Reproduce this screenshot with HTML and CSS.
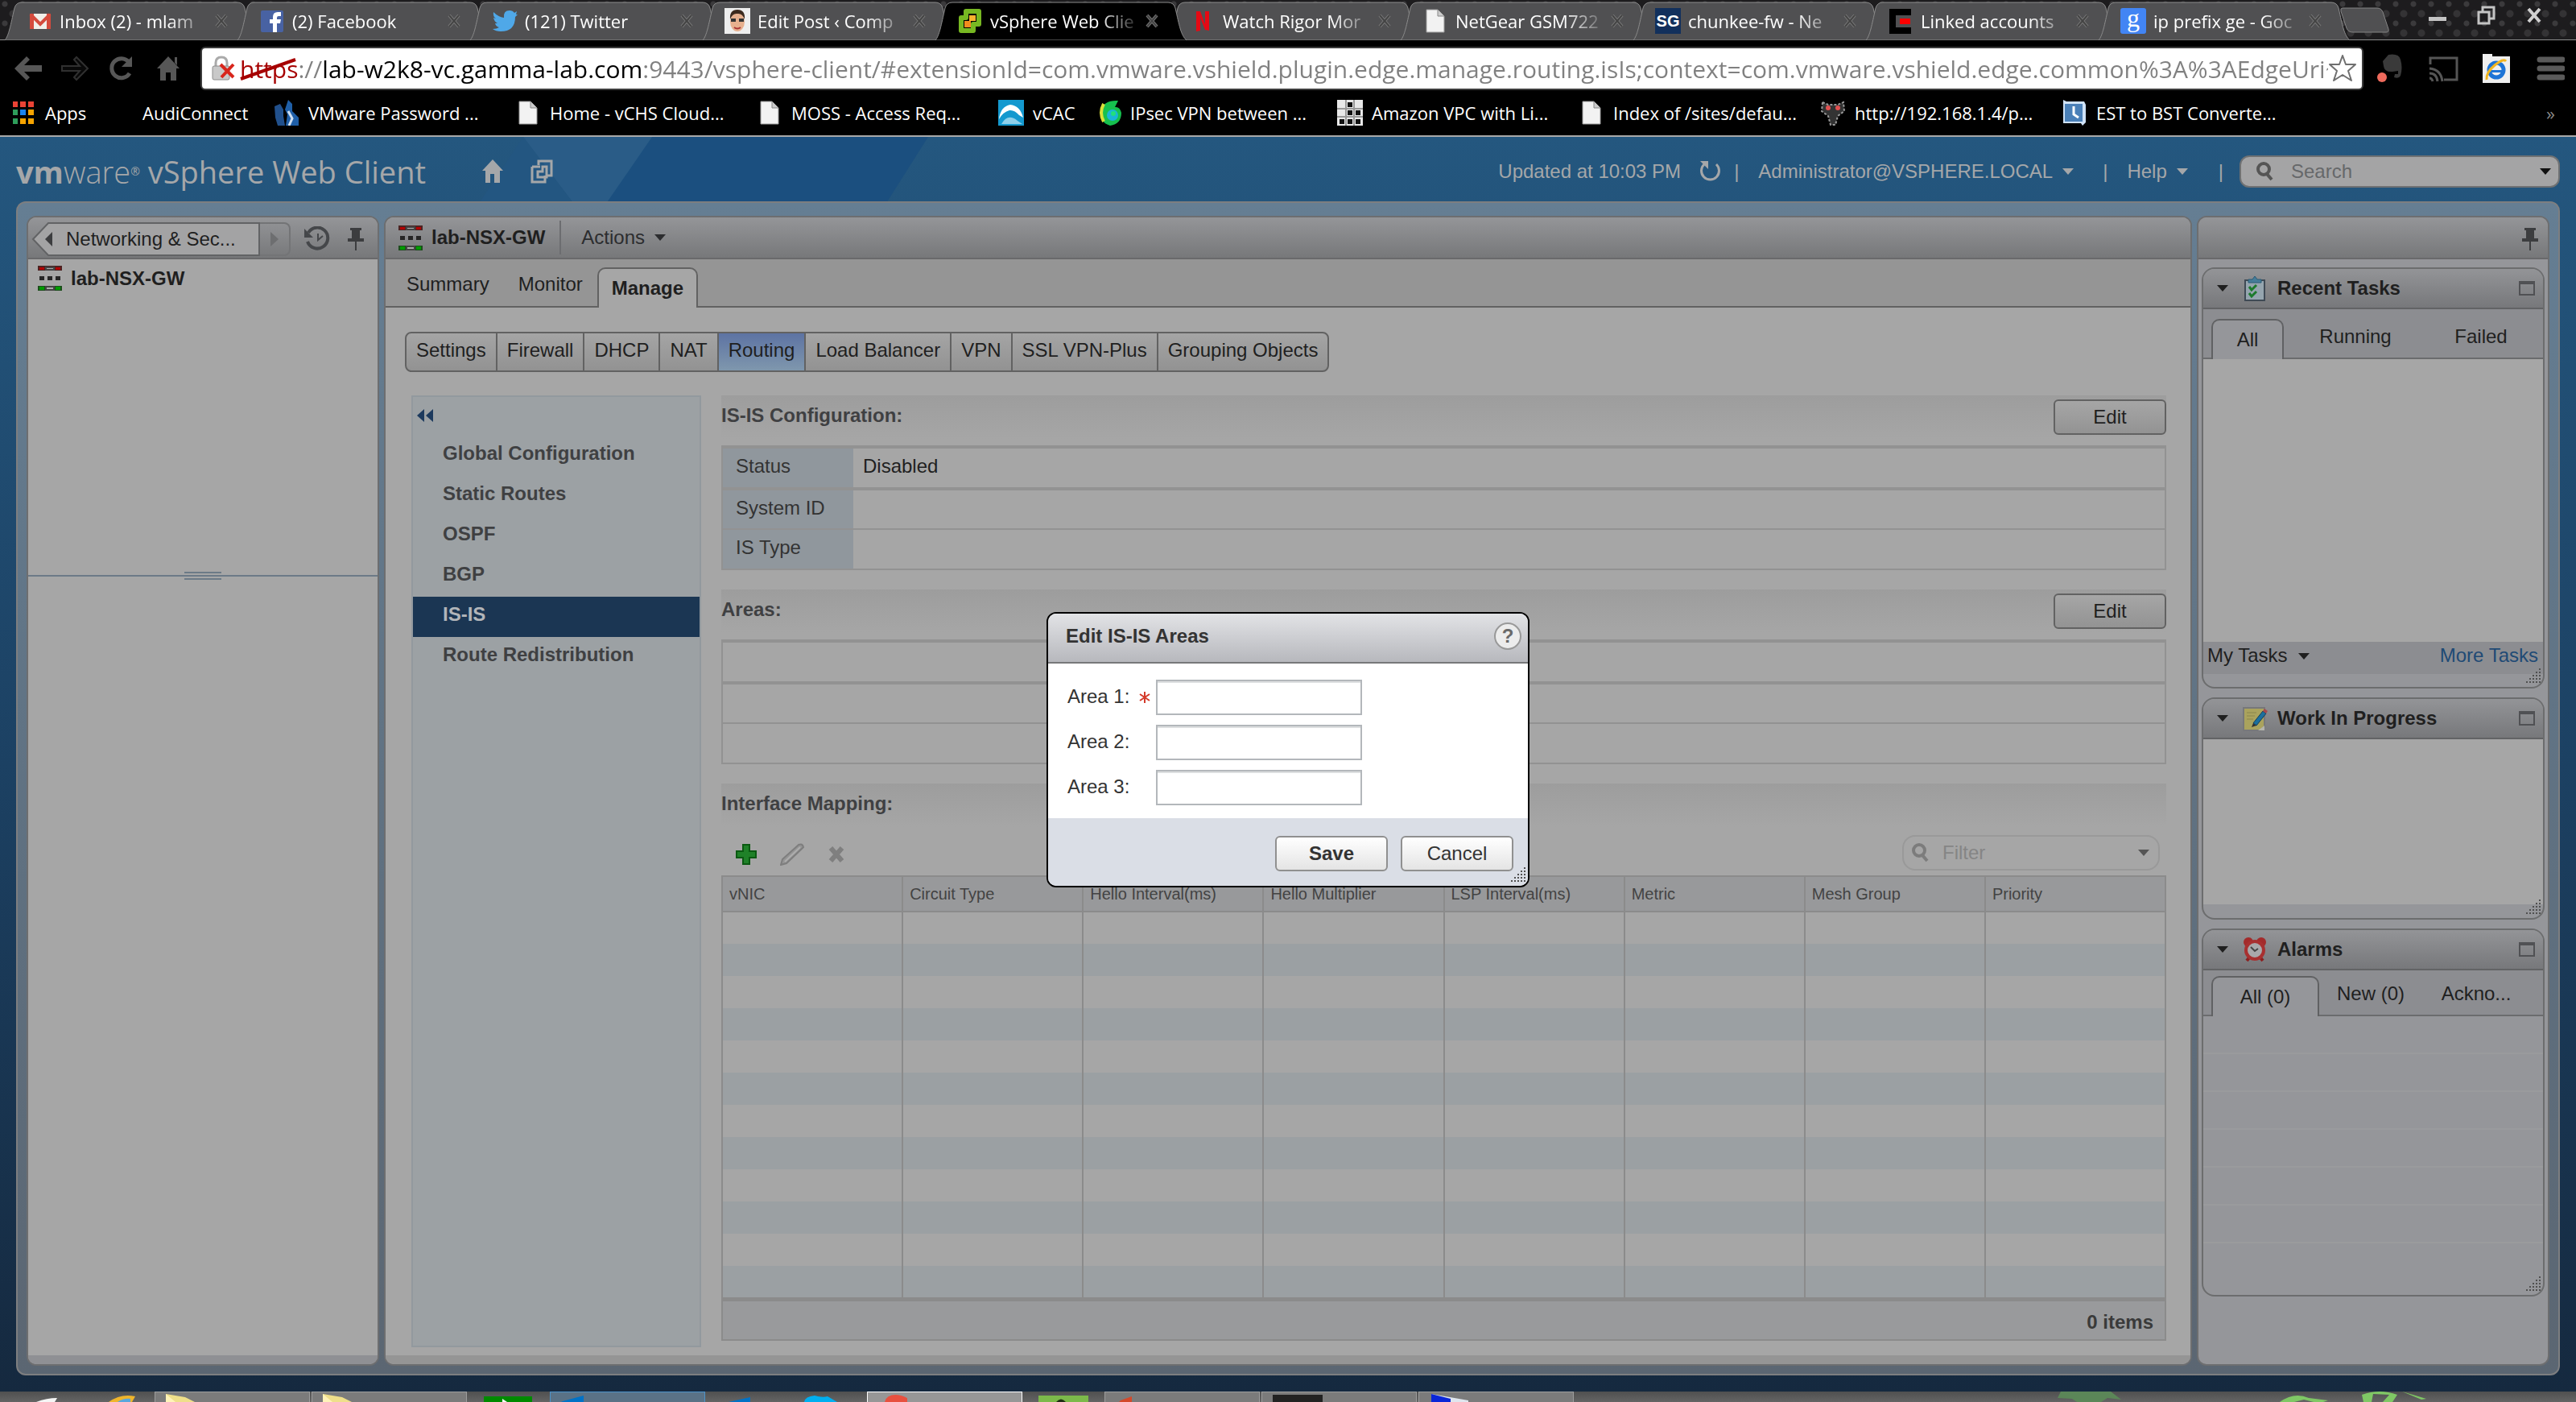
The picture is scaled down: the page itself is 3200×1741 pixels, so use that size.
FILE: index.html
```html
<!DOCTYPE html>
<html lang="en">
<head>
    <meta charset="UTF-8">
    <meta name="viewport" content="width=device-width, initial-scale=1.0">
    <title>vSphere Web Client</title>
    <link rel="stylesheet" href="styles.css">
</head>
<body>

    <!-- Shared icons -->
    <svg class="defs" aria-hidden="true">
        <symbol id="tab" viewBox="0 0 314 48">
            <path d="M1 48 C6 42 8 30 13 8 Q15 1 22 1 H290 Q297 1 299 8 C304 30 306 42 313 48 Z"/>
        </symbol>
        <symbol id="close" viewBox="0 0 18 18"><path d="M3 2 L15 16 M15 2 L3 16" stroke="#7a7a7a" stroke-width="4"/><path d="M3 2 L15 16 M15 2 L3 16" stroke="#444" stroke-width="2"/></symbol>
        <symbol id="page" viewBox="0 0 32 32"><path d="M5 2 H19 L27 10 V30 H5 Z" fill="#f2f2f2" stroke="#999" stroke-width="1"/><path d="M19 2 V10 H27" fill="#ccc" stroke="#888"/></symbol>
        <symbol id="caret" viewBox="0 0 14 8"><path d="M0 0 H14 L7 8 Z"/></symbol>
        <symbol id="pin" viewBox="0 0 20 28"><path d="M3 0 H17 V3 H15 V13 H20 V17 H11 V28 H9 V17 H0 V13 H5 V3 H3 Z"/></symbol>
        <symbol id="edge" viewBox="0 0 30 31">
            <path d="M0 0 H30 V6 H0 Z" fill="#4c2322"/><path d="M2 2 H8 V5 H2 Z M22 2 H28 V5 H22 Z" fill="#b30000"/><path d="M9 1 H21 V6 H9 Z" fill="#444"/><path d="M11 3 H19 V4 H11 Z" fill="#aaa"/>
            <path d="M2 13 H8 V18 H2 Z M12 13 H18 V18 H12 Z M22 13 H28 V18 H22 Z" fill="#262626"/>
            <path d="M0 25 H30 V31 H0 Z" fill="#1d4d1d"/><path d="M2 26 H8 V30 H2 Z M22 26 H28 V30 H22 Z" fill="#009a00"/><path d="M9 25 H21 V31 H9 Z" fill="#444"/><path d="M11 27 H19 V29 H11 Z" fill="#aaa"/>
        </symbol>
        <symbol id="search" viewBox="0 0 22 24"><circle cx="10" cy="9" r="7" fill="none" stroke="currentColor" stroke-width="4"/><path d="M14 15 L20 22" stroke="currentColor" stroke-width="4"/></symbol>
        <symbol id="window" viewBox="0 0 20 18"><path d="M1 2 H19 V17 H1 Z" fill="none" stroke="#505154" stroke-width="2"/><path d="M0 0 H20 V4 H0 Z" fill="#505154"/></symbol>
        <symbol id="grip" viewBox="0 0 20 22">
            <path d="M18 1 V21 M14 5 V21 M10 9 V21 M6 13 V21 M2 17 V21" stroke="currentColor" stroke-width="2" stroke-dasharray="2 2"/>
        </symbol>
        <symbol id="folder" viewBox="0 0 36 10"><path d="M0 0 L24 4 L36 10 H0 Z" fill="#efdf8a"/><path d="M0 0 L12 10 H0 Z" fill="#fff3b8"/></symbol>
    </svg>

    <!-- Browser tabs -->
    <div class="tabstrip">
        <div class="tab"><svg class="tab-shape"><use href="#tab"/></svg><svg class="fav" viewBox="0 0 32 32"><path d="M4 7 H30 V26 H4 Z" fill="#f1efe9"/><path d="M4 7 H9 V26 H4 Z M25 7 H30 V26 H25 Z" fill="#d54b3d"/><path d="M5 8 L17 20 L29 8" fill="none" stroke="#d54b3d" stroke-width="4"/></svg><span class="tab-title">Inbox (2) - mlam</span><button class="tab-close" aria-label="Close tab"><svg><use href="#close"/></svg></button></div>
        <div class="tab"><svg class="tab-shape"><use href="#tab"/></svg><svg class="fav" viewBox="0 0 32 32"><rect x="2" y="3" width="28" height="27" rx="2" fill="#4862a3"/><path d="M17 30 V19 H13 V14 H17 V11 Q17 5 23 5 H27 V10 H24 Q22 10 22 12 V14 H27 L26 19 H22 V30 Z" fill="#fff"/></svg><span class="tab-title">(2) Facebook</span><button class="tab-close" aria-label="Close tab"><svg><use href="#close"/></svg></button></div>
        <div class="tab"><svg class="tab-shape"><use href="#tab"/></svg><svg class="fav" viewBox="0 0 32 32"><path d="M2 5 Q8 11 15 12 Q14 3 22 3 Q26 3 28 6 L31 4 L30 8 L32 8 L29 11 Q29 29 11 29 Q5 29 1 26 Q6 26 9 24 Q5 23 4 19 H7 Q3 17 2 12 L5 13 Q1 10 2 5 Z" fill="#4fa8e8"/></svg><span class="tab-title">(121) Twitter</span><button class="tab-close" aria-label="Close tab"><svg><use href="#close"/></svg></button></div>
        <div class="tab"><svg class="tab-shape"><use href="#tab"/></svg><svg class="fav" viewBox="0 0 32 32"><path d="M0 0 H32 V32 H0 Z" fill="#eee"/><ellipse cx="16" cy="17" rx="9" ry="12" fill="#e7b08e"/><path d="M7 14 Q6 2 16 2 Q26 2 25 14 Q22 6 16 7 Q10 6 7 14 Z" fill="#3c2a1e"/><path d="M8 13 H14 V17 H8 Z M18 13 H24 V17 H18 Z" fill="#333"/><path d="M12 24 Q16 27 20 24" stroke="#a33" stroke-width="2" fill="none"/></svg><span class="tab-title">Edit Post ‹ Comp</span><button class="tab-close" aria-label="Close tab"><svg><use href="#close"/></svg></button></div>
        <div class="tab tab-active"><svg class="tab-shape"><use href="#tab"/></svg><svg class="fav" viewBox="0 0 32 32"><path d="M11 4 H27 V20 H20 V28 H5 V12 H11 Z" fill="none" stroke="#77b822" stroke-width="6" stroke-linejoin="round"/><path d="M15 9 H23 V16 H15 Z" fill="#f9b32f"/><path d="M9 16 H17 V24 H9 Z" fill="#f28c1e"/></svg><span class="tab-title">vSphere Web Clie</span><button class="tab-close" aria-label="Close tab"><svg><use href="#close"/></svg></button></div>
        <div class="tab"><svg class="tab-shape"><use href="#tab"/></svg><svg class="fav" viewBox="0 0 32 32"><path d="M8 4 H13 L19 20 V4 H24 V28 L19 27 L13 12 V28 L8 29 Z" fill="#e50914"/></svg><span class="tab-title">Watch Rigor Mor</span><button class="tab-close" aria-label="Close tab"><svg><use href="#close"/></svg></button></div>
        <div class="tab"><svg class="tab-shape"><use href="#tab"/></svg><svg class="fav"><use href="#page"/></svg><span class="tab-title">NetGear GSM722</span><button class="tab-close" aria-label="Close tab"><svg><use href="#close"/></svg></button></div>
        <div class="tab"><svg class="tab-shape"><use href="#tab"/></svg><span class="fav fav-sg">SG</span><span class="tab-title">chunkee-fw - Ne</span><button class="tab-close" aria-label="Close tab"><svg><use href="#close"/></svg></button></div>
        <div class="tab"><svg class="tab-shape"><use href="#tab"/></svg><svg class="fav" viewBox="0 0 32 32"><path d="M2 1 H29 V9 H10 V24 H29 V32 H2 Z" fill="#000"/><path d="M15 13 H28 V20 H15 Z" fill="#f00"/></svg><span class="tab-title">Linked accounts</span><button class="tab-close" aria-label="Close tab"><svg><use href="#close"/></svg></button></div>
        <div class="tab"><svg class="tab-shape"><use href="#tab"/></svg><span class="fav fav-google">g</span><span class="tab-title">ip prefix ge - Goc</span><button class="tab-close" aria-label="Close tab"><svg><use href="#close"/></svg></button></div>
        <button class="new-tab" aria-label="New tab"><svg viewBox="0 0 62 32"><path d="M3 1 H46 Q51 1 53 6 L60 27 Q61 31 57 31 H16 Q10 31 8 26 L1 5 Q0 1 3 1 Z" fill="#505052" stroke="#858585" stroke-width="1"/></svg></button>
        <div class="window-buttons">
            <button aria-label="Minimize"><svg viewBox="0 0 24 24"><path d="M1 14 H23 V19 H1 Z" fill="#c4c4c4"/></svg></button>
            <button aria-label="Restore"><svg viewBox="0 0 24 24"><path d="M8 8 V2 H22 V16 H17 M3 8 H16 V22 H3 Z" fill="none" stroke="#c4c4c4" stroke-width="3"/></svg></button>
            <button aria-label="Close window"><svg viewBox="0 0 24 24"><path d="M5 4 L19 20 M19 4 L5 20" stroke="#d0d0d0" stroke-width="4"/></svg></button>
        </div>
    </div>

    <!-- Address bar -->
    <div class="toolbar">
        <button class="nav-button" aria-label="Back"><svg viewBox="0 0 36 32"><path d="M1 16 L16 1 L20 5 L13 12 H35 V20 H13 L20 27 L16 31 Z" fill="#575757"/></svg></button>
        <button class="nav-button" aria-label="Forward"><svg viewBox="0 0 36 32"><path d="M34 16 L20 2 L17 5 L24 13 H2 V19 H24 L17 27 L20 30 Z" fill="#090909" stroke="#303030" stroke-width="2"/></svg></button>
        <button class="nav-button" aria-label="Reload"><svg viewBox="0 0 36 32"><path d="M28 22 A12 12 0 1 1 27 8" fill="none" stroke="#575757" stroke-width="5"/><path d="M31 1 V14 H18 Z" fill="#575757"/></svg></button>
        <button class="nav-button" aria-label="Home"><svg viewBox="0 0 36 32"><path d="M18 1 L32 16 H28 V31 H21 V21 H15 V31 H8 V16 H4 Z M26 2 H29 V12 L26 9 Z" fill="#575757"/></svg></button>
        <div class="address">
            <svg class="lock" viewBox="0 0 30 32"><path d="M6 14 V9 Q6 2 13 2 Q20 2 20 9 V14" fill="none" stroke="#aaa" stroke-width="3"/><rect x="2" y="13" width="21" height="17" rx="2" fill="#c9c9c9" stroke="#8c8c8c"/><path d="M12 11 L28 27 M28 11 L13 27" stroke="#d8261c" stroke-width="4"/></svg>
            <input class="url" type="text" aria-label="Address" value="https://lab-w2k8-vc.gamma-lab.com:9443/vsphere-client/#extensionId=com.vmware.vshield.plugin.edge.manage.routing.isIs;context=com.vmware.vshield.edge.common%3A%3AEdgeUri~">
            <svg class="strike" viewBox="0 0 70 28"><path d="M1 26 L69 2" stroke="#a60000" stroke-width="4"/></svg>
            <button class="star" aria-label="Bookmark this page"><svg viewBox="0 0 36 36"><path d="M18 2 L22 13 L34 13 L25 21 L29 33 L18 26 L7 33 L11 21 L2 13 L14 13 Z" fill="#fff" stroke="#6f6f6f" stroke-width="2" stroke-linejoin="round"/></svg></button>
        </div>
        <div class="extensions">
            <button aria-label="Clipper"><svg viewBox="0 0 38 38"><path d="M10 10 L17 2 Q30 0 32 8 Q35 18 32 28 Q30 32 24 30 L25 26 H29 V22 L22 23 Q12 24 11 16 Z" fill="#3a3a3a"/><circle cx="9" cy="30" r="6" fill="#ef6a5c"/></svg></button>
            <button aria-label="Cast"><svg viewBox="0 0 38 38"><path d="M3 14 V6 H36 V33 H20 M2 31 Q5 31 6 35 M2 25 Q11 25 12 35 M2 19 Q16 20 18 35" fill="none" stroke="#555" stroke-width="3"/></svg></button>
            <button aria-label="IE Tab"><svg viewBox="0 0 38 38"><path d="M2 1 H14 V4 H36 V37 H2 Z" fill="#efefef"/><circle cx="19" cy="21" r="9" fill="none" stroke="#1d74d6" stroke-width="5"/><path d="M12 21 H28 V24 H12 Z" fill="#1d74d6"/><path d="M7 33 Q6 24 17 15 Q28 6 31 10" fill="none" stroke="#f3b61f" stroke-width="3"/></svg></button>
            <button aria-label="Menu"><svg viewBox="0 0 38 38"><path d="M7 8 H35 M7 19 H35 M7 30 H35" stroke="#5a5a5a" stroke-width="7" stroke-linecap="round"/></svg></button>
        </div>
    </div>

    <!-- Bookmarks bar -->
    <nav class="bookmarks">
        <a class="short" href="#"><svg class="fav" viewBox="0 0 32 32"><path d="M3 2 H9 V9 H3 Z M12 2 H19 V9 H12 Z M22 2 H29 V9 H22 Z" fill="#ea4335"/><path d="M3 12 H9 V19 H3 Z M3 23 H9 V30 H3 Z" fill="#2e9e5b"/><path d="M12 12 H19 V19 H12 Z" fill="#1a84f0"/><path d="M22 12 H29 V19 H22 Z M12 23 H19 V30 H12 Z M22 23 H29 V30 H22 Z" fill="#f6a400"/></svg>Apps</a>
        <a class="medium" href="#"><span class="fav"></span>AudiConnect</a>
        <a href="#"><svg class="fav" viewBox="0 0 32 32"><path d="M18 0 L23 5 V14 L31 22 V32 H15 L17 18 L14 12 Z" fill="#1f5fa8"/><path d="M1 8 L8 5 L12 12 V20 L14 32 H5 L2 22 Z" fill="#21508c"/><path d="M18 14 L23 23 L19 32" stroke="#cfe0f2" stroke-width="3" fill="none"/></svg>VMware Password ...</a>
        <a href="#"><svg class="fav"><use href="#page"/></svg>Home - vCHS Cloud...</a>
        <a href="#"><svg class="fav"><use href="#page"/></svg>MOSS - Access Req...</a>
        <a class="short" href="#"><svg class="fav" viewBox="0 0 32 32"><path d="M0 0 H32 V32 H0 Z" fill="#1499cf"/><path d="M1 24 Q3 8 15 6 Q27 7 31 22 L26 19 Q20 12 14 13 Q6 15 1 24 Z" fill="#fff"/><path d="M4 30 Q12 16 24 26 L30 30 Z" fill="#8fd0ea"/></svg>vCAC</a>
        <a href="#"><svg class="fav" viewBox="0 0 32 32"><path d="M28 1 Q10 0 6 14 Q5 28 18 32 Q32 30 32 16 Q30 8 24 9 Z" fill="#16c04e"/><path d="M10 5 Q4 16 10 27" stroke="#d8e03a" stroke-width="4" fill="none"/><circle cx="21" cy="19" r="7" fill="#19b5d8"/><circle cx="22" cy="17" r="3" fill="#21e07c"/></svg>IPsec VPN between ...</a>
        <a href="#"><svg class="fav" viewBox="0 0 32 32"><path d="M0 0 H32 V32 H0 Z" fill="#e8e8e8"/><path d="M0 11 H32 M0 21 H32 M11 0 V32 M21 0 V32" stroke="#999" stroke-width="2"/><path d="M13 3 H19 V9 H13 Z M23 13 H29 V19 H23 Z M13 13 H19 V19 H13 Z M3 24 H9 V30 H3 Z M13 24 H19 V30 H13 Z M23 24 H29 V30 H23 Z" fill="#111"/></svg>Amazon VPC with Li...</a>
        <a href="#"><svg class="fav"><use href="#page"/></svg>Index of /sites/defau...</a>
        <a href="#"><svg class="fav" viewBox="0 0 32 32"><path d="M3 3 L10 6 H22 L29 3 L30 14 L22 20 L19 31 H13 L10 20 L2 14 Z" fill="#333" stroke="#999" stroke-width="2" stroke-dasharray="3 2"/><circle cx="10" cy="10" r="3" fill="#e05050"/><circle cx="22" cy="10" r="3" fill="#e05050"/></svg>http://192.168.1.4/p...</a>
        <a href="#"><svg class="fav" viewBox="0 0 32 32"><path d="M2 0 L6 2 H28 L30 6 V28 L26 32 L24 29 H2 Z" fill="#cfe2f7"/><path d="M4 5 H26 V27 H4 Z" fill="#4a80b8"/><path d="M15 8 V18 L21 22" stroke="#fff" stroke-width="3" fill="none"/></svg>EST to BST Converte...</a>
        <button class="more-bookmarks" aria-label="More bookmarks">»</button>
    </nav>

    <div class="app">
        <svg class="facets" viewBox="0 0 3200 260" preserveAspectRatio="xMinYMin slice" aria-hidden="true">
            <path d="M810 0 H1153 L1096 90 H745 Z" fill="#1b4f7f"/>
            <path d="M650 0 H810 L748 90 H718 Z" fill="#2a5c87"/>
            <path d="M650 0 L718 90 H590 Z" fill="#235681"/>
        </svg>

        <header class="app-header">
            <div class="brand"><b>vm</b><i>ware</i><sup>®</sup> vSphere Web Client</div>
            <button class="icon-button" aria-label="Home"><svg width="26" height="30" viewBox="0 0 26 30"><path d="M13 0 L26 14 H22 V29 H15 V18 H10 V29 H4 V14 H0 Z" fill="#a5a7a9"/></svg></button>
            <button class="icon-button" aria-label="Open windows"><svg width="28" height="30" viewBox="0 0 28 30"><path d="M10 7 V2 H26 V20 H20 M2 9 H12 M2 9 V28 H18 V20 M9 15 V22 H20 V9 H15 V15 Z" fill="none" stroke="#a5a7a9" stroke-width="3"/></svg></button>
            <div class="account">
                <span>Updated at 10:03 PM</span>
                <button class="refresh" aria-label="Refresh"><svg width="28" height="28" viewBox="0 0 28 28"><path d="M22 5 A11 11 0 1 1 7 5" fill="none" stroke="#a5a7a9" stroke-width="3"/><path d="M2 1 H12 V11 Z" fill="#a5a7a9"/></svg></button>
                <span class="bar">|</span>
                <button class="user">Administrator@VSPHERE.LOCAL <svg class="caret"><use href="#caret"/></svg></button>
                <span class="bar">|</span>
                <button class="help-menu">Help <svg class="caret"><use href="#caret"/></svg></button>
                <span class="bar">|</span>
            </div>
            <div class="search">
                <svg width="22" height="24"><use href="#search"/></svg>
                <input type="search" aria-label="Search" placeholder="Search">
                <svg class="caret"><use href="#caret"/></svg>
            </div>
        </header>

        <div class="workspace">
            <aside class="panel navigator">
                <div class="panel-header">
                    <button class="crumb"><svg class="crumb-shape" viewBox="0 0 284 42"><path d="M2 21 L21 1 H283 V41 H21 Z" fill="#a3a3a4" stroke="#626365" stroke-width="2"/><path d="M26 12 V30 L17 21 Z" fill="#3c3d3f"/></svg>Networking &amp; Sec...</button>
                    <button class="crumb-next" aria-label="Forward"><svg width="10" height="18" viewBox="0 0 10 18"><path d="M0 0 L10 9 L0 18 Z" fill="#6d6e70"/></svg></button>
                    <button class="icon-button history" aria-label="History"><svg width="32" height="32" viewBox="0 0 32 32"><path d="M5 8 A13 13 0 1 1 4 19" fill="none" stroke="#45474a" stroke-width="4"/><path d="M0 3 V14 H11 Z" fill="#45474a"/><path d="M17 9 V17 L23 12" fill="none" stroke="#45474a" stroke-width="2"/></svg></button>
                    <button class="icon-button" aria-label="Unpin"><svg width="20" height="28" fill="#3c3d3f"><use href="#pin"/></svg></button>
                </div>
                <div class="tree">
                    <a href="#"><svg width="30" height="31"><use href="#edge"/></svg>lab-NSX-GW</a>
                </div>
                <div class="splitter"></div>
                <div class="tree-rest"></div>
                <div class="panel-footer"></div>
            </aside>

            <main class="panel content">
                <div class="panel-header object-header">
                    <svg width="30" height="31"><use href="#edge"/></svg>
                    <h1>lab-NSX-GW</h1>
                    <button class="actions">Actions <svg class="caret"><use href="#caret"/></svg></button>
                </div>
                <div class="view-tabs">
                    <button>Summary</button>
                    <button>Monitor</button>
                    <button class="active">Manage</button>
                </div>

                <div class="manage">
                    <div class="subtabs">
                        <button>Settings</button>
                        <button>Firewall</button>
                        <button>DHCP</button>
                        <button>NAT</button>
                        <button class="active">Routing</button>
                        <button>Load Balancer</button>
                        <button>VPN</button>
                        <button>SSL VPN-Plus</button>
                        <button>Grouping Objects</button>
                    </div>

                    <div class="routing">
                        <nav class="routing-nav">
                            <button class="collapse" aria-label="Collapse"><svg width="20" height="16" viewBox="0 0 20 16"><path d="M9 0 V16 L0 8 Z M20 0 V16 L11 8 Z" fill="#1c3a5e"/></svg></button>
                            <a href="#">Global Configuration</a>
                            <a href="#">Static Routes</a>
                            <a href="#">OSPF</a>
                            <a href="#">BGP</a>
                            <a class="active" href="#">IS-IS</a>
                            <a href="#">Route Redistribution</a>
                        </nav>

                        <div class="sections">
                            <section>
                                <div class="section-header"><h2>IS-IS Configuration:</h2><button class="edit">Edit</button></div>
                                <table class="props">
                                    <tr><th scope="row">Status</th><td>Disabled</td></tr>
                                    <tr><th scope="row">System ID</th><td></td></tr>
                                    <tr><th scope="row">IS Type</th><td></td></tr>
                                </table>
                            </section>
                            <section>
                                <div class="section-header"><h2>Areas:</h2><button class="edit">Edit</button></div>
                                <table class="props">
                                    <tr><td></td></tr>
                                    <tr><td></td></tr>
                                    <tr><td></td></tr>
                                </table>
                            </section>
                            <section class="mapping">
                                <div class="section-header"><h2>Interface Mapping:</h2></div>
                                <div class="grid-tools">
                                    <button aria-label="Add"><svg width="26" height="26" viewBox="0 0 26 26"><path d="M9 1 H17 V9 H25 V17 H17 V25 H9 V17 H1 V9 H9 Z" fill="#1f8128" stroke="#0b5a12" stroke-width="2"/></svg></button>
                                    <button aria-label="Edit mapping"><svg width="30" height="28" viewBox="0 0 30 28"><path d="M1 27 L3 20 L23 2 Q28 0 29 5 L8 25 Z" fill="#959595" stroke="#7e7e7e" stroke-width="2"/><path d="M6 23 L25 5" stroke="#adadad" stroke-width="2"/></svg></button>
                                    <button aria-label="Delete"><svg width="22" height="22" viewBox="0 0 22 22"><path d="M4 3 L18 19 M18 3 L4 19" stroke="#7f7f7f" stroke-width="6"/></svg></button>
                                    <div class="filter">
                                        <svg width="22" height="24"><use href="#search"/></svg>
                                        <input type="search" aria-label="Filter" placeholder="Filter">
                                        <svg class="caret"><use href="#caret"/></svg>
                                    </div>
                                </div>
                                <table class="grid">
                                    <thead>
                                        <tr><th>vNIC</th><th>Circuit Type</th><th>Hello Interval(ms)</th><th>Hello Multiplier</th><th>LSP Interval(ms)</th><th>Metric</th><th>Mesh Group</th><th>Priority</th></tr>
                                    </thead>
                                    <tbody>
                                        <tr><td></td><td></td><td></td><td></td><td></td><td></td><td></td><td></td></tr>
                                        <tr><td></td><td></td><td></td><td></td><td></td><td></td><td></td><td></td></tr>
                                        <tr><td></td><td></td><td></td><td></td><td></td><td></td><td></td><td></td></tr>
                                        <tr><td></td><td></td><td></td><td></td><td></td><td></td><td></td><td></td></tr>
                                        <tr><td></td><td></td><td></td><td></td><td></td><td></td><td></td><td></td></tr>
                                        <tr><td></td><td></td><td></td><td></td><td></td><td></td><td></td><td></td></tr>
                                        <tr><td></td><td></td><td></td><td></td><td></td><td></td><td></td><td></td></tr>
                                        <tr><td></td><td></td><td></td><td></td><td></td><td></td><td></td><td></td></tr>
                                        <tr><td></td><td></td><td></td><td></td><td></td><td></td><td></td><td></td></tr>
                                        <tr><td></td><td></td><td></td><td></td><td></td><td></td><td></td><td></td></tr>
                                        <tr><td></td><td></td><td></td><td></td><td></td><td></td><td></td><td></td></tr>
                                        <tr><td></td><td></td><td></td><td></td><td></td><td></td><td></td><td></td></tr>
                                    </tbody>
                                </table>
                                <div class="grid-footer">0 items</div>
                            </section>
                        </div>
                    </div>
                </div>
                <div class="panel-footer"></div>
            </main>

            <aside class="panel sidebar">
                <div class="panel-header sidebar-header">
                    <button class="icon-button" aria-label="Unpin"><svg width="20" height="28" fill="#3c3d3f"><use href="#pin"/></svg></button>
                </div>
                <div class="portlets">
                    <section class="portlet tasks">
                        <div class="portlet-header">
                            <button aria-label="Collapse Recent Tasks"><svg class="caret"><use href="#caret"/></svg></button>
                            <svg width="32" height="32" viewBox="0 0 32 32"><path d="M4 6 H28 V31 H4 Z" fill="#95a5af" stroke="#3f4a55" stroke-width="2"/><path d="M8 5 H13 L16 1 L19 5 H24 V9 H8 Z" fill="#467d99" stroke="#2b5a75"/><path d="M9 14 L12 18 L18 12 M9 22 L12 26 L18 20" fill="none" stroke="#1c7a2c" stroke-width="3"/></svg>
                            <h3>Recent Tasks</h3>
                            <button aria-label="Maximize Recent Tasks"><svg width="20" height="18"><use href="#window"/></svg></button>
                        </div>
                        <div class="portlet-tabs">
                            <button class="active w90">All</button>
                            <button class="w178">Running</button>
                            <button class="w134">Failed</button>
                        </div>
                        <div class="portlet-body"></div>
                        <div class="task-bar">
                            <label class="task-filter"><select aria-label="Task filter"><option>My Tasks</option></select><svg class="caret"><use href="#caret"/></svg></label>
                            <a href="#">More Tasks</a>
                        </div>
                        <svg class="grip"><use href="#grip"/></svg>
                    </section>

                    <section class="portlet work">
                        <div class="portlet-header">
                            <button aria-label="Collapse Work In Progress"><svg class="caret"><use href="#caret"/></svg></button>
                            <svg width="32" height="32" viewBox="0 0 32 32"><path d="M2 3 H28 V26 L23 31 H2 Z" fill="#aaa35d" stroke="#77787a" stroke-width="2"/><path d="M6 9 H18 M6 13 H16 M6 17 H14" stroke="#8a854f" stroke-width="1"/><path d="M14 22 L26 7 L30 10 L18 25 Z" fill="#1b6f9e" stroke="#123f5c"/><path d="M14 22 L18 25 L12 27 Z" fill="#333"/><path d="M26 7 L28 4 L32 7 L30 10 Z" fill="#a8484c"/><path d="M20 31 L28 25 V31 Z" fill="#b4b4ac"/></svg>
                            <h3>Work In Progress</h3>
                            <button aria-label="Maximize Work In Progress"><svg width="20" height="18"><use href="#window"/></svg></button>
                        </div>
                        <div class="portlet-body"></div>
                        <svg class="grip"><use href="#grip"/></svg>
                    </section>

                    <section class="portlet alarms">
                        <div class="portlet-header">
                            <button aria-label="Collapse Alarms"><svg class="caret"><use href="#caret"/></svg></button>
                            <svg width="32" height="32" viewBox="0 0 32 32"><circle cx="8" cy="7" r="6" fill="#a32b2b"/><circle cx="24" cy="7" r="6" fill="#a32b2b"/><path d="M6 30 L10 25 M26 30 L22 25" stroke="#8c2020" stroke-width="4"/><circle cx="16" cy="17" r="11" fill="#a9a9ab" stroke="#a83030" stroke-width="4"/><path d="M11 13 L16 18 L20 15" fill="none" stroke="#444" stroke-width="2"/></svg>
                            <h3>Alarms</h3>
                            <button aria-label="Maximize Alarms"><svg width="20" height="18"><use href="#window"/></svg></button>
                        </div>
                        <div class="portlet-tabs">
                            <button class="active w134">All (0)</button>
                            <button class="w128">New (0)</button>
                            <button class="w134">Ackno...</button>
                        </div>
                        <div class="alarm-rows"></div>
                        <svg class="grip"><use href="#grip"/></svg>
                    </section>
                </div>
            </aside>
        </div>

        <!-- Edit areas dialog -->
        <div class="modal-layer">
            <form class="dialog" role="dialog" aria-labelledby="dialogTitle">
                <div class="dialog-header">
                    <h2 id="dialogTitle">Edit IS-IS Areas</h2>
                    <button type="button" class="dialog-help" aria-label="Help">?</button>
                </div>
                <div class="dialog-body">
                    <div class="field"><label for="area1">Area 1:</label><svg class="required" viewBox="0 0 14 14"><path d="M7 0 V14 M1 3 L13 11 M13 3 L1 11" stroke="#d43a2a" stroke-width="2"/></svg><input type="text" id="area1" required></div>
                    <div class="field"><label for="area2">Area 2:</label><input type="text" id="area2"></div>
                    <div class="field"><label for="area3">Area 3:</label><input type="text" id="area3"></div>
                </div>
                <div class="dialog-footer">
                    <button type="submit" class="save">Save</button>
                    <button type="button">Cancel</button>
                </div>
                <svg class="grip"><use href="#grip"/></svg>
            </form>
        </div>
    </div>

    <!-- Desktop taskbar, only its top edge is on screen -->
    <div class="taskbar">
        <svg class="splats" viewBox="0 0 3200 13" preserveAspectRatio="xMinYMin slice" aria-hidden="true">
            <path d="M45 13 Q58 8 71 8 L68 13 Z" fill="#f5f5f5"/>
            <path d="M135 13 Q150 2 168 6 L164 13 Z" fill="#efb52c"/><path d="M146 13 Q154 8 162 9 V13 Z" fill="#59a7dd"/>
            <path d="M601 6 H661 V13 H601 Z" fill="#008a00"/><path d="M624 9 L630 13 H624 Z" fill="#fff"/>
            <path d="M905 13 L932 7 V13 Z" fill="#0072c6"/>
            <path d="M999 13 Q1000 6 1012 5 Q1022 8 1028 6 L1040 13 Z" fill="#00aff0"/>
            <path d="M1290 5 H1352 V13 H1290 Z" fill="#7cb94a"/><path d="M1312 13 Q1318 6 1324 13 Z" fill="#1f2e14"/>
            <path d="M2560 0 H2622 L2635 10 L2618 8 L2610 13 H2580 L2574 9 L2556 8 Z" fill="#5b8658"/>
            <path d="M2832 13 Q2850 0 2868 8 L2892 11 L2886 13 H2874 L2862 10 L2850 13 Z" fill="#7fc765"/>
            <path d="M2934 4 Q2956 -4 2978 4 L2972 13 H2960 L2968 4 L2948 3 L2946 13 H2936 Z M2984 0 L3014 9 L3008 10 Z" fill="#7fc765"/>
        </svg>
        <div class="task"><svg><use href="#folder"/></svg></div>
        <div class="task"><svg><use href="#folder"/></svg></div>
        <div class="task task-blue"><svg viewBox="0 0 36 10"><path d="M2 9 L28 2 V10 H0 Z" fill="#0072c6"/></svg></div>
        <div class="task task-active"><svg viewBox="0 0 36 10"><path d="M8 10 Q10 1 22 1 Q36 2 40 10 Z" fill="#e8503f"/></svg></div>
        <div class="task task-apart"><svg viewBox="0 0 36 10"><path d="M6 8 L20 3 V10 H4 Z" fill="#d3492b"/></svg></div>
        <div class="task"><svg class="wide" viewBox="0 0 62 10"><path d="M0 1 H62 V10 H0 Z" fill="#222"/></svg></div>
        <div class="task"><svg class="wide" viewBox="0 0 62 10"><path d="M2 0 L48 8 V10 H2 Z" fill="#dfe6ee"/><path d="M2 0 L26 6 V10 H2 Z" fill="#0a26d8"/></svg></div>
    </div>

</body>
</html>
```
FILE: styles.css
```css
* {
    box-sizing: border-box;
}

html, body {
    height: 100%;
}

body {
    margin: 0;
    display: flex;
    flex-direction: column;
    background-color: #000;
    font-family: "Liberation Sans", Arial, sans-serif;
    font-size: 24px;
    line-height: 28px;
    color: #1f1f1f;
    overflow: hidden;
}

button, input, select {
    font: inherit;
    color: inherit;
    margin: 0;
    padding: 0;
    border: none;
    background: none;
}

input:focus, button:focus {
    outline: none;
}

a {
    color: inherit;
    text-decoration: none;
}

h1, h2, h3 {
    margin: 0;
    font-size: 24px;
    line-height: 28px;
    font-weight: bold;
}

svg {
    display: block;
    flex: none;
}

.defs {
    position: absolute;
    width: 0;
    height: 0;
}

.caret {
    width: 14px;
    height: 8px;
    fill: currentColor;
}

.fav {
    flex: none;
    width: 32px;
    height: 32px;
}

/* Browser */

.tabstrip {
    flex: none;
    display: flex;
    height: 50px;
    padding-left: 17px;
    border-bottom: 1px solid #8c8c8c;
    background-color: #1d1c1e;
    background-image: radial-gradient(circle at 6px 5px, #3b3a3c 3px, transparent 4px), radial-gradient(circle at 16px 17px, #343335 4px, transparent 5px);
    background-size: 22px 24px;
    color: #fff;
    font-family: "Open Sans", "Noto Sans", sans-serif;
    font-size: 22px;
}

.tab {
    position: relative;
    flex: 0 1 289px;
    display: flex;
    align-items: center;
    padding: 3px 22px 0 16px;
    min-width: 0;
}

.tab-shape {
    position: absolute;
    left: -12px;
    top: 2px;
    width: 314px;
    height: 48px;
    fill: #505052;
    stroke: #8c8c8c;
    stroke-width: 1px;
}

.tab-active {
    z-index: 1;
}

.tab-active .tab-shape {
    fill: #000;
}

.tab .fav {
    position: relative;
    margin-right: 9px;
}

.tab-title {
    position: relative;
    flex: 1;
    margin-right: 4px;
    white-space: nowrap;
    -webkit-mask-image: linear-gradient(to right, #000 135px, transparent 190px);
    mask-image: linear-gradient(to right, #000 135px, transparent 190px);
}

.tab-close {
    position: relative;
}

.tab-close svg {
    width: 18px;
    height: 18px;
}

.fav-sg {
    background-color: #12305c;
    color: #fff;
    font: bold 20px/32px "Liberation Sans", sans-serif;
    text-align: center;
}

.fav-google {
    background-color: #4285f4;
    border-radius: 3px;
    font: 32px/24px "Liberation Serif", serif;
    text-align: center;
}

.new-tab {
    align-self: center;
}

.new-tab svg {
    width: 62px;
    height: 32px;
}

.window-buttons {
    display: flex;
    gap: 36px;
    margin-left: auto;
    padding: 0 40px 12px 0;
}

.window-buttons svg {
    width: 24px;
    height: 24px;
}

.toolbar {
    flex: none;
    display: flex;
    align-items: center;
    height: 70px;
    padding: 0 14px 0 17px;
}

.nav-button {
    width: 58px;
}

.nav-button svg {
    width: 36px;
    height: 32px;
}

.address {
    position: relative;
    flex: 1;
    display: flex;
    align-items: center;
    height: 54px;
    padding: 0 6px 0 11px;
    border: 2px solid #3c3c3c;
    border-radius: 6px;
    background-color: #fff;
}

.lock {
    width: 30px;
    height: 32px;
}

.url {
    flex: 1;
    min-width: 0;
    margin-left: 6px;
    height: 44px;
    font-family: "Open Sans", "Noto Sans", sans-serif;
    font-size: 30px;
    /* scheme, slashes, host, path */
    background: linear-gradient(to right, #a60000 72px, #808080 72px, #808080 102px, #000 102px, #000 501px, #808080 501px);
    -webkit-background-clip: text;
    background-clip: text;
    color: transparent;
}

.strike {
    position: absolute;
    left: 47px;
    top: 12px;
    width: 70px;
    height: 28px;
}

.star svg {
    width: 36px;
    height: 36px;
}

.extensions {
    display: flex;
    gap: 28px;
    margin-left: 14px;
}

.extensions svg {
    width: 38px;
    height: 38px;
}

.bookmarks {
    flex: none;
    display: flex;
    align-items: center;
    height: 50px;
    padding: 0 26px 8px 13px;
    border-bottom: 2px solid #a9a9a9;
    color: #fff;
    font-family: "Open Sans", "Noto Sans", sans-serif;
    font-size: 22px;
}

.bookmarks a {
    display: flex;
    align-items: center;
    gap: 11px;
    flex: 0 1 300px;
    white-space: nowrap;
}

.bookmarks .short {
    flex-basis: 121px;
}

.bookmarks .medium {
    flex-basis: 206px;
}

.more-bookmarks {
    margin-left: auto;
    color: #8a8a8a;
}

/* vSphere client */

.app {
    position: relative;
    flex: 1;
    min-height: 0;
    display: flex;
    flex-direction: column;
    padding: 0 20px 20px;
    background-image: linear-gradient(#24577f, #1c4163 50%, #15293f);
}

.facets {
    position: absolute;
    left: 0;
    top: 0;
    width: 100%;
    height: 260px;
}

.app-header {
    position: relative;
    flex: none;
    display: flex;
    align-items: center;
    height: 80px;
    padding-top: 6px;
    color: #a5a7a9;
}

.brand {
    margin-right: 70px;
    font-family: "Open Sans", "Noto Sans", sans-serif;
    font-size: 38px;
    line-height: 44px;
}

.brand i {
    font-style: normal;
    font-weight: 300;
}

.brand sup {
    font-size: 14px;
    line-height: 14px;
    vertical-align: 10px;
}

.app-header .icon-button {
    margin-right: 34px;
}

.account {
    display: flex;
    align-items: center;
    margin-left: auto;
}

.account button {
    display: flex;
    align-items: center;
    gap: 12px;
}

.account .refresh {
    margin: 0 16px 0 22px;
}

.account .user {
    margin: 0 36px 0 24px;
}

.account .help-menu {
    margin: 0 38px 0 24px;
}

.search {
    display: flex;
    align-items: center;
    width: 398px;
    height: 40px;
    margin-left: 20px;
    padding: 0 9px 0 18px;
    border: 2px solid #6f7173;
    border-radius: 12px;
    background-color: #a4a4a5;
    color: #555;
}

.search input {
    flex: 1;
    min-width: 0;
    margin-left: 22px;
}

.search input::placeholder {
    color: #66686a;
    opacity: 1;
}

.search .caret {
    color: #111;
}

.workspace {
    position: relative;
    flex: 1;
    min-height: 0;
    display: flex;
    gap: 6px;
    padding: 16px 11px 10px;
    border: 2px solid #7d7e80;
    border-radius: 12px;
    background-image: linear-gradient(#657e93, #5b6672);
}

.panel {
    display: flex;
    flex-direction: column;
    min-width: 0;
    border: 2px solid #6d6e70;
    border-radius: 12px;
    background-color: #a6a6a6;
    overflow: hidden;
}

.panel-header {
    flex: none;
    display: flex;
    align-items: center;
    height: 52px;
    border-bottom: 2px solid #69696b;
    background-image: linear-gradient(#949598, #77787a);
}

.panel-footer {
    flex: none;
    height: 11px;
    background-color: #959595;
}

.navigator, .sidebar {
    flex: none;
    width: 438px;
}

.navigator .panel-header {
    padding: 4px 0 0 4px;
}

.crumb {
    position: relative;
    z-index: 0;
    width: 284px;
    height: 42px;
    padding-left: 43px;
    text-align: left;
    white-space: nowrap;
}

.crumb-shape {
    position: absolute;
    left: 0;
    top: 0;
    z-index: -1;
    width: 284px;
    height: 42px;
}

.crumb-next {
    display: flex;
    align-items: center;
    justify-content: center;
    width: 38px;
    height: 42px;
    border: 2px solid #737476;
    border-left: none;
    border-radius: 0 8px 8px 0;
}

.history {
    margin: 0 22px 0 17px;
}

.tree {
    flex: none;
    height: 392px;
    padding: 8px 12px;
}

.tree a {
    display: flex;
    align-items: center;
    gap: 11px;
    font-weight: bold;
}

/* the drag handle is the pair of short lines */
.splitter {
    flex: none;
    height: 10px;
    margin-top: -4px;
    background: linear-gradient(#6c7a87, #6c7a87) center / 100% 2px no-repeat, linear-gradient(#6c7a87, #6c7a87) top / 46px 2px no-repeat, linear-gradient(#6c7a87, #6c7a87) bottom / 46px 2px no-repeat;
}

.tree-rest {
    flex: 1;
}

.navigator .panel-footer {
    background-color: #8f9094;
}

.content {
    flex: 1;
}

.object-header {
    padding-left: 16px;
}

.object-header h1 {
    margin: 0 18px 0 11px;
}

.actions {
    display: flex;
    align-items: center;
    gap: 12px;
    height: 42px;
    padding-left: 25px;
    border-left: 2px solid #6c6d70;
    color: #2c2d2f;
}

.view-tabs {
    flex: none;
    display: flex;
    height: 60px;
    padding-left: 8px;
    border-bottom: 2px solid #626262;
    background-color: #959595;
}

.view-tabs button {
    padding: 12px 18px 8px;
}

.view-tabs .active {
    height: 50px;
    margin-top: 10px;
    padding: 6px 16px 6px;
    border: 2px solid #626262;
    border-bottom: none;
    border-radius: 10px 10px 0 0;
    background-color: #a6a6a6;
    font-weight: bold;
}

.manage {
    flex: 1;
    min-height: 0;
    display: flex;
    flex-direction: column;
    padding: 30px 30px 10px 24px;
}

.subtabs {
    align-self: flex-start;
    display: flex;
    height: 50px;
    border: 2px solid #626262;
    border-radius: 8px;
    background-image: linear-gradient(#a5a5a5, #929292);
    overflow: hidden;
}

.subtabs button {
    padding: 0 12px 4px;
    border-right: 2px solid #626262;
}

.subtabs button:last-child {
    border-right: none;
}

.subtabs .active {
    background-image: linear-gradient(#5d73a3, #7f97ad);
}

.routing {
    flex: 1;
    min-height: 0;
    display: flex;
    gap: 25px;
    padding: 29px 0 0 8px;
}

.routing-nav {
    flex: none;
    width: 360px;
    border: 2px solid #92999e;
    background-color: #9ca1a4;
    font-weight: bold;
    color: #3f4042;
}

.collapse {
    display: block;
    padding: 15px 5px 17px;
}

.routing-nav a {
    display: block;
    padding: 8px 37px 14px;
}

.routing-nav .active {
    background-color: #1b3653;
    color: #b2b5b9;
}

.sections {
    flex: 1;
    min-width: 0;
    display: flex;
    flex-direction: column;
    gap: 24px;
}

.section-header {
    display: flex;
    justify-content: space-between;
    height: 54px;
    padding-top: 5px;
    background-image: linear-gradient(#9d9d9d, #a6a6a6);
    color: #3f4042;
}

.section-header h2 {
    padding-top: 6px;
}

.edit {
    width: 140px;
    height: 44px;
    border: 2px solid #626262;
    border-radius: 6px;
    background-image: linear-gradient(#a6a6a6, #939393);
    color: #1f1f1f;
}

.props {
    width: 100%;
    margin-top: 8px;
    border-collapse: collapse;
    border: 2px solid #929292;
}

.props tr {
    height: 50px;
    border-bottom: 2px solid #929292;
}

.props tr:first-child {
    height: 52px;
    border-top: 4px solid #929292;
    border-bottom-width: 4px;
}

.props th {
    width: 163px;
    padding: 0 0 4px 16px;
    background-color: #90979d;
    color: #333;
    font-weight: normal;
    text-align: left;
}

.props td {
    padding: 0 0 4px 12px;
}

.mapping {
    flex: 1;
    display: flex;
    flex-direction: column;
}

.grid-tools {
    display: flex;
    align-items: center;
    gap: 29px;
    height: 60px;
    padding: 8px 8px 0 18px;
}

.filter {
    display: flex;
    align-items: center;
    width: 320px;
    height: 44px;
    margin: 0 0 4px auto;
    padding: 0 11px 0 9px;
    border: 2px solid #999;
    border-radius: 16px;
    color: #7c7c7c;
}

.filter input {
    flex: 1;
    min-width: 0;
    margin-left: 17px;
}

.filter input::placeholder {
    color: #858585;
    opacity: 1;
}

.filter .caret {
    color: #555;
}

.grid {
    width: 100%;
    table-layout: fixed;
    border-collapse: collapse;
    border: 2px solid #8b8b8b;
    font-size: 20px;
}

.grid th {
    height: 44px;
    padding: 0 8px;
    border: 2px solid #8b8b8b;
    background-color: #98999b;
    color: #434343;
    font-weight: normal;
    text-align: left;
    white-space: nowrap;
}

.grid td {
    height: 40px;
    padding: 0;
    border-left: 2px solid #8b8b8b;
}

.grid tbody tr:nth-child(even) {
    background-color: #9ba0a3;
}

.grid-footer {
    height: 52px;
    padding: 12px 14px;
    border: 2px solid #8b8b8b;
    border-top-width: 3px;
    background-color: #999a9c;
    color: #3a3a3a;
    font-weight: bold;
    text-align: right;
}

/* Right side portlets */

.sidebar {
    background-color: #95969a;
}

.sidebar-header {
    justify-content: flex-end;
    padding: 4px 12px 0 0;
}

.portlets {
    display: flex;
    flex-direction: column;
    gap: 11px;
    padding: 10px 4px;
}

.portlet {
    position: relative;
    display: flex;
    flex-direction: column;
    border: 2px solid #6c6d6e;
    border-radius: 16px;
    background-color: #95969a;
    overflow: hidden;
}

.portlet-header {
    flex: none;
    display: flex;
    align-items: center;
    height: 50px;
    padding: 0 10px 0 17px;
    border-bottom: 2px solid #626365;
    background-image: linear-gradient(#939497, #77787b);
}

.portlet-header h3 {
    flex: 1;
    margin-left: 12px;
}

.portlet-header button + svg {
    margin-left: 17px;
}

.portlet-tabs {
    flex: none;
    display: flex;
    align-items: flex-end;
    height: 62px;
    padding-left: 10px;
    border-bottom: 2px solid #6b6c6e;
    background-color: #8c8d91;
}

.portlet-tabs button {
    height: 52px;
}

.portlet-tabs .active {
    height: 50px;
    margin-bottom: -2px;
    border: 2px solid #606163;
    border-bottom: none;
    border-radius: 10px 10px 0 0;
    background-color: #95969a;
}

.alarms .portlet-tabs {
    height: 57px;
}

.w90 { width: 90px; }
.w128 { width: 128px; }
.w134 { width: 134px; }
.w178 { width: 178px; }

.portlet-body {
    flex: 1;
    background-color: #a6a6a6;
}

.tasks {
    height: 523px;
    padding-bottom: 16px;
}

.work {
    height: 276px;
    padding-bottom: 17px;
}

.alarms {
    height: 457px;
}

.task-bar {
    flex: none;
    display: flex;
    justify-content: space-between;
    height: 40px;
    padding: 3px 6px 0 5px;
    background-color: #8c8d91;
}

.task-filter {
    display: flex;
    gap: 12px;
}

.task-filter .caret {
    margin-top: 11px;
}

.task-filter select {
    appearance: none;
    height: 28px;
}

.task-bar a {
    color: #1f4a75;
}

.alarm-rows {
    flex: 1;
    background-image: repeating-linear-gradient(transparent 0, transparent 45px, #9a9b9d 45px, #9a9b9d 47px);
    margin-bottom: 64px;
}

.grip {
    position: absolute;
    right: 2px;
    bottom: 2px;
    width: 20px;
    height: 22px;
    color: #505050;
}

/* Dialog */

.modal-layer {
    position: absolute;
    inset: 0;
    display: flex;
    align-items: center;
    justify-content: center;
    padding-bottom: 36px;
}

.dialog {
    position: relative;
    width: 600px;
    border: 2px solid #000;
    border-radius: 12px;
    background-color: #fff;
    color: #333;
    overflow: hidden;
}

.dialog-header {
    display: flex;
    align-items: center;
    justify-content: space-between;
    height: 62px;
    padding: 0 8px 4px 22px;
    border-bottom: 2px solid #77787a;
    background-image: linear-gradient(#e2e3e6, #b7b8bd);
}

.dialog-help {
    width: 34px;
    height: 34px;
    border: 2px solid #999;
    border-radius: 50%;
    background-color: #ececec;
    font-weight: bold;
    color: #6a6a6a;
}

.dialog-body {
    display: flex;
    flex-direction: column;
    gap: 12px;
    padding: 20px 24px 16px;
}

.field {
    display: flex;
    align-items: center;
}

.field label {
    width: 89px;
    padding-bottom: 2px;
}

.field input {
    width: 256px;
    height: 44px;
    margin-left: 21px;
    padding: 0 8px;
    border: 2px solid #b3b7bb;
    box-shadow: inset 0 2px 0 #dddfe0;
}

.required {
    width: 14px;
    height: 14px;
}

.required + input {
    margin-left: 7px;
}

.dialog-footer {
    display: flex;
    justify-content: flex-end;
    gap: 16px;
    padding: 22px 18px 18px;
    background-color: #dadee6;
}

.dialog-footer button {
    width: 140px;
    height: 44px;
    border: 2px solid #909090;
    border-radius: 6px;
    background-image: linear-gradient(#fff, #e4e4e4);
}

.dialog-footer .save {
    font-weight: bold;
}

/* Taskbar */

.taskbar {
    position: relative;
    flex: none;
    display: flex;
    gap: 2px;
    height: 13px;
    padding-left: 192px;
    background-image: linear-gradient(#505050, #646464);
    overflow: hidden;
}

.splats {
    position: absolute;
    left: 0;
    top: 0;
    width: 100%;
    height: 13px;
}

.task {
    position: relative;
    flex: none;
    width: 193px;
    height: 13px;
    padding: 2px 13px 0;
    border: 1px solid #9d9d9d;
    border-bottom: none;
    background-color: #7b7b7b;
}

.task svg {
    width: 36px;
    height: 10px;
}

.task .wide {
    width: 62px;
}

.task-blue {
    margin-left: 101px;
    border-color: #4d93c9;
    background-color: #5a7286;
}

.task-active {
    margin-left: 199px;
    border-color: #fff;
    background-color: #979797;
}

.task-apart {
    margin-left: 100px;
}
```
